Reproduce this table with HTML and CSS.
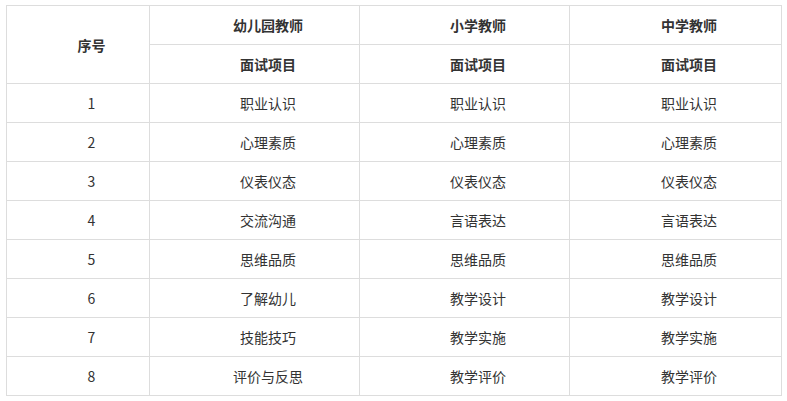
FILE: index.html
```html
<!DOCTYPE html>
<html lang="zh">
<head>
<meta charset="utf-8">
<link rel="stylesheet" href="styles.css">
</head>
<body>
<div class="wrap">
<table class="grid">
<colgroup>
<col class="c0"><col class="c1"><col class="c2"><col class="c3">
</colgroup>
<thead>
<tr><th rowspan="2">序号</th><th>幼儿园教师</th><th>小学教师</th><th>中学教师</th></tr>
<tr><th>面试项目</th><th>面试项目</th><th>面试项目</th></tr>
</thead>
<tbody>
<tr><td>1</td><td>职业认识</td><td>职业认识</td><td>职业认识</td></tr>
<tr><td>2</td><td>心理素质</td><td>心理素质</td><td>心理素质</td></tr>
<tr><td>3</td><td>仪表仪态</td><td>仪表仪态</td><td>仪表仪态</td></tr>
<tr><td>4</td><td>交流沟通</td><td>言语表达</td><td>言语表达</td></tr>
<tr><td>5</td><td>思维品质</td><td>思维品质</td><td>思维品质</td></tr>
<tr><td>6</td><td>了解幼儿</td><td>教学设计</td><td>教学设计</td></tr>
<tr><td>7</td><td>技能技巧</td><td>教学实施</td><td>教学实施</td></tr>
<tr><td>8</td><td>评价与反思</td><td>教学评价</td><td>教学评价</td></tr>
</tbody>
</table>
</div>
</body>
</html>
```
FILE: styles.css
```css
html, body {
  margin: 0;
  padding: 0;
  background: #ffffff;
}
.wrap {
  padding: 5px 0 0 6px;
}
.grid {
  border-collapse: collapse;
  table-layout: fixed;
  width: 775px;
  font-family: "Noto Sans CJK SC", "Microsoft YaHei", sans-serif;
  font-size: 14px;
  color: #333333;
}
.c0 { width: 143px; }
.c1 { width: 210px; }
.c2 { width: 210px; }
.c3 { width: 212px; }
.grid th, .grid td {
  border: 1px solid #dddddd;
  height: 38px;
  padding: 0 0 0 27px;
  text-align: center;
  vertical-align: middle;
  line-height: 20px;
}
.grid th {
  font-weight: bold;
}
```
